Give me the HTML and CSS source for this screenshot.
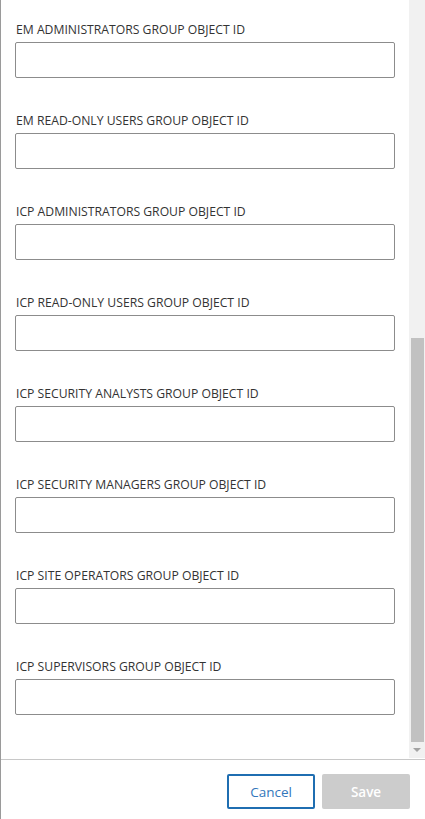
FILE: index.html
```html
<!DOCTYPE html>
<html>
<head>
<meta charset="utf-8">
<link rel="stylesheet" href="styles.css">
</head>
<body>
<div class="panel">
  <div class="main">
    <div class="fields">
      <div class="field"><label class="label">EM ADMINISTRATORS GROUP OBJECT ID</label><input class="input" type="text"></div>
      <div class="field"><label class="label">EM READ-ONLY USERS GROUP OBJECT ID</label><input class="input" type="text"></div>
      <div class="field"><label class="label">ICP ADMINISTRATORS GROUP OBJECT ID</label><input class="input" type="text"></div>
      <div class="field"><label class="label">ICP READ-ONLY USERS GROUP OBJECT ID</label><input class="input" type="text"></div>
      <div class="field"><label class="label">ICP SECURITY ANALYSTS GROUP OBJECT ID</label><input class="input" type="text"></div>
      <div class="field"><label class="label">ICP SECURITY MANAGERS GROUP OBJECT ID</label><input class="input" type="text"></div>
      <div class="field"><label class="label">ICP SITE OPERATORS GROUP OBJECT ID</label><input class="input" type="text"></div>
      <div class="field"><label class="label">ICP SUPERVISORS GROUP OBJECT ID</label><input class="input" type="text"></div>
    </div>
    <div class="scrollbar">
      <div class="track">
        <div class="thumb"></div>
      </div>
      <div class="arrow-btn"><span class="arrow"></span></div>
    </div>
  </div>
  <div class="footer">
    <button class="btn btn-cancel">Cancel</button>
    <button class="btn btn-save">Save</button>
  </div>
</div>
</body>
</html>
```

FILE: styles.css
```css
html, body {
  margin: 0;
  padding: 0;
  background: #ffffff;
}

body {
  font-family: "Open Sans", "Liberation Sans", sans-serif;
}

.panel {
  width: 424px;
  height: 819px;
  border-left: 1px solid #9a9a9a;
  display: flex;
  flex-direction: column;
  overflow: hidden;
}

.main {
  flex: 1;
  display: flex;
  min-height: 0;
  overflow: hidden;
}

.fields {
  flex: 1;
  padding: 22px 13px 0 14px;
}

.field {
  display: flex;
  flex-direction: column;
  margin-bottom: 35px;
}

.label {
  font-size: 12.2px;
  line-height: 16px;
  color: #333333;
  margin-bottom: 4px;
  padding-left: 1px;
  white-space: nowrap;
}

.input {
  box-sizing: border-box;
  width: 380px;
  height: 36px;
  margin: 0;
  border: 1px solid #8c8c8c;
  border-radius: 2px;
  background: #ffffff;
  outline: none;
  padding: 0 8px;
}

.scrollbar {
  width: 16px;
  display: flex;
  flex-direction: column;
  background: #f1f1f1;
  height: 758px;
}

.track {
  flex: 1;
  display: flex;
  flex-direction: column;
  justify-content: flex-end;
}

.thumb {
  height: 404px;
  margin: 0 1px 0 2px;
  background: #c1c1c1;
}

.arrow-btn {
  height: 16px;
  display: flex;
  align-items: center;
  justify-content: center;
}

.arrow {
  width: 0;
  height: 0;
  border-left: 4px solid transparent;
  border-right: 4px solid transparent;
  border-top: 4px solid #a3a3a3;
}

.footer {
  border-top: 1px solid #c8c8c8;
  display: flex;
  justify-content: flex-end;
  align-items: flex-start;
  gap: 7px;
  padding: 14px 15px 0 0;
  box-sizing: border-box;
  height: 60px;
}

.btn {
  box-sizing: border-box;
  height: 35px;
  font-family: "Open Sans", "Liberation Sans", sans-serif;
  font-size: 13.5px;
  border-radius: 2px;
  margin: 0;
  cursor: pointer;
}

.btn-cancel {
  width: 88px;
  background: #ffffff;
  border: 2px solid #1f6eb1;
  color: #3377bb;
}

.btn-save {
  width: 88px;
  background: #cccccc;
  border: none;
  color: #ffffff;
  font-weight: 600;
}
```
